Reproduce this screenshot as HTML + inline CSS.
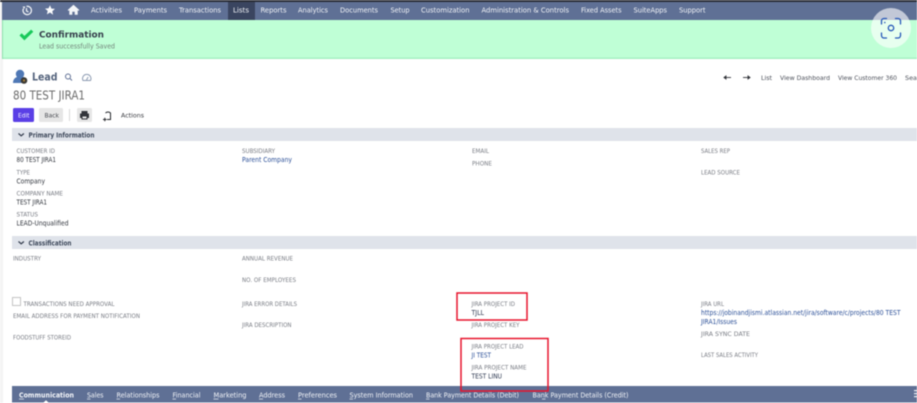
<!DOCTYPE html>
<html lang="en">
<head>
<meta charset="utf-8">
<title>Lead - 80 TEST JIRA1</title>
<style>
html,body{margin:0;padding:0;background:#fff;width:917px;height:403px;overflow:hidden}
svg{display:block;position:absolute;left:0;top:0;filter:blur(.42px)}
text{font-family:"DejaVu Sans","Liberation Sans",sans-serif;font-size:6.6px;white-space:pre}
.n{fill:#f2f4f8;font-size:6.9px}
.l{fill:#7a7d85;font-size:6.4px}
.v{fill:#33373f;font-size:6.6px}
.a{fill:#2c5098;font-size:6.6px}
.h{fill:#3f4a5c;font-size:6.8px;font-weight:bold}
.t{fill:#f2f4f8;font-size:6.8px}
.r{fill:#4e525c;font-size:6.4px}
</style>
</head>
<body>
<svg width="917" height="403" viewBox="0 0 917 403" xmlns="http://www.w3.org/2000/svg">
<rect width="917" height="403" fill="#fff"/>
<rect x="0" y="0" width="3" height="403" fill="#f4f4f4"/>
<rect x="0" y="0" width="917" height="2" fill="#2a2d36"/>
<rect x="2" y="2" width="915" height="18" fill="#5f7095"/>
<rect x="228" y="2" width="27" height="18" fill="#3a4560"/>

<g fill="none" stroke="#f3f5f8" stroke-width="1.2">
<path d="M23.5 8.5 A4.2 4.2 0 1 0 26.5 6.3"/>
<path d="M26.5 8v3l2 1"/>
</g>
<path d="M22.5 6.5l1.8 2.4 1-2.4z" fill="#f3f5f8"/>
<path d="M50 5.3l1.4 3.3 3.6.3-2.7 2.3.8 3.5L50 12.5l-3.1 1.9.8-3.5-2.7-2.3 3.6-.3z" fill="#fbfcfd"/>
<path d="M73.5 4.8l5.8 5.2-.8.9-.8-.7v4.6h-3v-3h-2.4v3h-3V10.200l-.8.7-.8-.9z" fill="#f3f5f8"/>

<text class="n" y="12.500" x="91" textLength="31" lengthAdjust="spacingAndGlyphs">Activities</text>
<text class="n" y="12.500" x="134" textLength="33" lengthAdjust="spacingAndGlyphs">Payments</text>
<text class="n" y="12.500" x="179" textLength="42" lengthAdjust="spacingAndGlyphs">Transactions</text>
<text class="n" y="12.500" x="233" textLength="16" lengthAdjust="spacingAndGlyphs">Lists</text>
<text class="n" y="12.500" x="260.500" textLength="26" lengthAdjust="spacingAndGlyphs">Reports</text>
<text class="n" y="12.500" x="298" textLength="30" lengthAdjust="spacingAndGlyphs">Analytics</text>
<text class="n" y="12.500" x="340" textLength="38" lengthAdjust="spacingAndGlyphs">Documents</text>
<text class="n" y="12.500" x="390.500" textLength="19" lengthAdjust="spacingAndGlyphs">Setup</text>
<text class="n" y="12.500" x="421" textLength="48.500" lengthAdjust="spacingAndGlyphs">Customization</text>
<text class="n" y="12.500" x="481.500" textLength="87.500" lengthAdjust="spacingAndGlyphs">Administration &amp; Controls</text>
<text class="n" y="12.500" x="581" textLength="40.500" lengthAdjust="spacingAndGlyphs">Fixed Assets</text>
<text class="n" y="12.500" x="633.500" textLength="33.500" lengthAdjust="spacingAndGlyphs">SuiteApps</text>
<text class="n" y="12.500" x="679" textLength="26.500" lengthAdjust="spacingAndGlyphs">Support</text>

<rect x="2" y="20" width="915" height="39" fill="#bfffd6"/>
<rect x="2" y="57.500" width="915" height="1.500" fill="#a6f0c2"/>
<rect x="2" y="20" width="1" height="39" fill="#8fe0ad"/>
<path d="M19.500 35.500l2.200-2.300 2.700 2.700 6.700-6.300 2.200 2.200-8.900 8.600z" fill="#18c95a"/>
<text x="39" y="37.300" textLength="65" lengthAdjust="spacingAndGlyphs" style="font-size:8.800px;font-weight:bold;fill:#37404d">Confirmation</text>
<text x="39" y="48.300" textLength="76" lengthAdjust="spacingAndGlyphs" style="font-size:6.600px;fill:#74877c">Lead successfully Saved</text>

<circle cx="891" cy="28" r="20" fill="#fff" fill-opacity=".62"/>
<g fill="none" stroke="#2557b8" stroke-width="1.300" stroke-linecap="round">
<path d="M881.500 24v-3a2.500 2.500 0 0 1 2.500-2.500h2.500"/>
<path d="M895.500 18.500h2.500a2.500 2.500 0 0 1 2.500 2.500v3"/>
<path d="M900.500 33v2.500a2.500 2.500 0 0 1-2.500 2.500h-2.500"/>
<path d="M886.500 38H884a2.500 2.500 0 0 1-2.500-2.500V33"/>
<circle cx="891" cy="28" r="2.700"/>
</g>
<circle cx="884.800" cy="22.500" r=".8" fill="#2557b8"/>

<circle cx="20" cy="74" r="4.200" fill="#4f78b5"/>
<path d="M13 83c0-4.500 3-6.500 7-6.500s6 1.500 6.500 3l-2 3.500z" fill="#4f78b5"/>
<circle cx="24" cy="80.500" r="3.300" fill="#3b3a36"/>
<circle cx="24" cy="80.500" r="1" fill="#b9893c"/>
<text x="32" y="80.700" textLength="25.500" lengthAdjust="spacingAndGlyphs" style="font-size:11px;font-weight:bold;fill:#55647d">Lead</text>
<g fill="none" stroke="#5f7095" stroke-width="1">
<circle cx="68" cy="76.500" r="2.500"/>
<path d="M70 78.500l2 2"/>
<path d="M83 80.500a4.200 4.200 0 1 1 7.500 0z" stroke="#8d9bb2"/>
<path d="M86.500 80l1.600-3" stroke="#8d9bb2"/>
</g>
<text x="13" y="99.500" textLength="72" lengthAdjust="spacingAndGlyphs" style="font-size:12.500px;fill:#6c6c6c">80 TEST JIRA1</text>

<rect x="13" y="108" width="21" height="14" rx="1.500" fill="#5a3fe6"/>
<text x="18" y="117.600" textLength="11.500" lengthAdjust="spacingAndGlyphs" style="font-size:6.400px;fill:#f2f0ff">Edit</text>
<rect x="39" y="108" width="24" height="14" rx="1.500" fill="#e6e6e6"/>
<text x="44.500" y="117.600" textLength="14.500" lengthAdjust="spacingAndGlyphs" style="font-size:6.400px;fill:#494c52">Back</text>
<rect x="69" y="109" width="1" height="12" fill="#d9d9d9"/>
<rect x="77" y="108" width="15" height="14" rx="1.500" fill="#e6e6e6"/>
<path d="M81.500 111h6v2.500h1.500v4.500h-1.500v1.500h-6V118H80v-4.500h1.500z" fill="#33353b"/>
<rect x="82.500" y="116.500" width="4" height="2" fill="#e6e6e6"/>
<g fill="none" stroke="#26282d" stroke-width="1">
<path d="M105.500 113a3.500 3.500 0 0 1 5 0v6.500h-3.500"/>
<path d="M103 119.500h3.500M104.800 117.800v3.500"/>
</g>
<text x="121" y="117.600" textLength="23" lengthAdjust="spacingAndGlyphs" style="font-size:6.400px;fill:#3a3c42">Actions</text>

<g stroke="#33353b" stroke-width=".9" fill="#33353b">
<path d="M724 77.500h7" fill="none"/><path d="M726 76l-2 1.500 2 1.500z"/>
<path d="M743 77.500h7" fill="none"/><path d="M748 76l2 1.500-2 1.500z"/>
</g>
<text class="r" x="761" y="80" textLength="11" lengthAdjust="spacingAndGlyphs">List</text>
<text class="r" x="780" y="80" textLength="50" lengthAdjust="spacingAndGlyphs">View Dashboard</text>
<text class="r" x="838" y="80" textLength="59" lengthAdjust="spacingAndGlyphs">View Customer 360</text>
<text class="r" x="905" y="80" textLength="12" lengthAdjust="spacingAndGlyphs">Sea</text>

<rect x="12" y="128" width="905" height="13" fill="#dfe3ea"/>
<path d="M18.500 133.500l2.700 2.300 2.700-2.300" fill="none" stroke="#333c4d" stroke-width="1.200"/>
<text class="h" x="28.500" y="137.300" textLength="66" lengthAdjust="spacingAndGlyphs">Primary Information</text>
<rect x="12" y="236" width="905" height="13" fill="#dfe3ea"/>
<path d="M18.500 241.500l2.700 2.300 2.700-2.300" fill="none" stroke="#333c4d" stroke-width="1.200"/>
<text class="h" x="28.500" y="245.300" textLength="43" lengthAdjust="spacingAndGlyphs">Classification</text>

<text class="l" x="16.500" y="153" textLength="38.500" lengthAdjust="spacingAndGlyphs">CUSTOMER ID</text>
<text class="v" x="16.500" y="162" textLength="39.500" lengthAdjust="spacingAndGlyphs">80 TEST JIRA1</text>
<text class="l" x="16.500" y="174.300" textLength="13.500" lengthAdjust="spacingAndGlyphs">TYPE</text>
<text class="v" x="16.500" y="183.300" textLength="28.500" lengthAdjust="spacingAndGlyphs">Company</text>
<text class="l" x="16.500" y="195.500" textLength="46.500" lengthAdjust="spacingAndGlyphs">COMPANY NAME</text>
<text class="v" x="16.500" y="204.500" textLength="30.500" lengthAdjust="spacingAndGlyphs">TEST JIRA1</text>
<text class="l" x="16.500" y="216.500" textLength="21.500" lengthAdjust="spacingAndGlyphs">STATUS</text>
<text class="v" x="16.500" y="225.500" textLength="52" lengthAdjust="spacingAndGlyphs">LEAD-Unqualified</text>

<text class="l" x="242" y="153" textLength="33" lengthAdjust="spacingAndGlyphs">SUBSIDIARY</text>
<text class="a" x="242" y="162" textLength="50" lengthAdjust="spacingAndGlyphs">Parent Company</text>
<text class="l" x="472" y="153" textLength="17" lengthAdjust="spacingAndGlyphs">EMAIL</text>
<text class="l" x="472" y="165.300" textLength="20" lengthAdjust="spacingAndGlyphs">PHONE</text>
<text class="l" x="701" y="153" textLength="29" lengthAdjust="spacingAndGlyphs">SALES REP</text>
<text class="l" x="701" y="174.300" textLength="39" lengthAdjust="spacingAndGlyphs">LEAD SOURCE</text>

<text class="l" x="13" y="260.500" textLength="28" lengthAdjust="spacingAndGlyphs">INDUSTRY</text>
<text class="l" x="242" y="260.500" textLength="51" lengthAdjust="spacingAndGlyphs">ANNUAL REVENUE</text>
<text class="l" x="242" y="281.800" textLength="54" lengthAdjust="spacingAndGlyphs">NO. OF EMPLOYEES</text>

<rect x="12.500" y="297.500" width="8" height="8" fill="#fff" stroke="#c4c4c4" stroke-width="1"/>
<text class="l" x="23.500" y="305.800" textLength="91" lengthAdjust="spacingAndGlyphs">TRANSACTIONS NEED APPROVAL</text>
<text class="l" x="13" y="317.800" textLength="127" lengthAdjust="spacingAndGlyphs">EMAIL ADDRESS FOR PAYMENT NOTIFICATION</text>
<text class="l" x="13" y="339.300" textLength="58" lengthAdjust="spacingAndGlyphs">FOODSTUFF STOREID</text>

<text class="l" x="242" y="305.800" textLength="55" lengthAdjust="spacingAndGlyphs">JIRA ERROR DETAILS</text>
<text class="l" x="242" y="327.200" textLength="49.500" lengthAdjust="spacingAndGlyphs">JIRA DESCRIPTION</text>

<text class="l" x="471.500" y="305.800" textLength="43.500" lengthAdjust="spacingAndGlyphs">JIRA PROJECT ID</text>
<text class="v" x="471.500" y="314.800" textLength="12.500" lengthAdjust="spacingAndGlyphs" style="fill:#2f3a52">TJLL</text>
<text class="l" x="471.500" y="327.200" textLength="48" lengthAdjust="spacingAndGlyphs">JIRA PROJECT KEY</text>
<text class="l" x="471.500" y="348.300" textLength="52" lengthAdjust="spacingAndGlyphs">JIRA PROJECT LEAD</text>
<text class="a" x="471.500" y="357.300" textLength="19.500" lengthAdjust="spacingAndGlyphs">JI TEST</text>
<text class="l" x="471.500" y="369.500" textLength="55" lengthAdjust="spacingAndGlyphs">JIRA PROJECT NAME</text>
<text class="v" x="471.500" y="378.500" textLength="30.500" lengthAdjust="spacingAndGlyphs" style="fill:#2f3a52">TEST LINU</text>

<text class="l" x="701" y="305.800" textLength="23" lengthAdjust="spacingAndGlyphs">JIRA URL</text>
<text class="a" x="701" y="314.800" textLength="199.500" lengthAdjust="spacingAndGlyphs">https://jobinandjismi.atlassian.net/jira/software/c/projects/80 TEST</text>
<text class="a" x="701" y="323.800" textLength="36" lengthAdjust="spacingAndGlyphs">JIRA1/Issues</text>
<text class="l" x="701" y="335.800" textLength="49" lengthAdjust="spacingAndGlyphs">JIRA SYNC DATE</text>
<text class="l" x="701" y="356.800" textLength="57" lengthAdjust="spacingAndGlyphs">LAST SALES ACTIVITY</text>

<rect x="12" y="386" width="905" height="16.500" fill="#5f7095"/>
<text x="19" y="397.500" textLength="55" lengthAdjust="spacingAndGlyphs" style="font-size:6.900px;font-weight:bold;fill:#f4f6fa">Communication</text>
<text class="t" x="87" y="397.500" textLength="16.500" lengthAdjust="spacingAndGlyphs">Sales</text>
<text class="t" x="116.500" y="397.500" textLength="43" lengthAdjust="spacingAndGlyphs">Relationships</text>
<text class="t" x="172.500" y="397.500" textLength="28" lengthAdjust="spacingAndGlyphs">Financial</text>
<text class="t" x="213.500" y="397.500" textLength="33" lengthAdjust="spacingAndGlyphs">Marketing</text>
<text class="t" x="259" y="397.500" textLength="26" lengthAdjust="spacingAndGlyphs">Address</text>
<text class="t" x="298" y="397.500" textLength="39" lengthAdjust="spacingAndGlyphs">Preferences</text>
<text class="t" x="349.500" y="397.500" textLength="63.500" lengthAdjust="spacingAndGlyphs">System Information</text>
<text class="t" x="426" y="397.500" textLength="93" lengthAdjust="spacingAndGlyphs">Bank Payment Details (Debit)</text>
<text class="t" x="532.500" y="397.500" textLength="96" lengthAdjust="spacingAndGlyphs">Bank Payment Details (Credit)</text>
<g fill="#eef1f6">
<rect x="19" y="398.700" width="5" height=".7"/>
<rect x="87" y="398.700" width="3.500" height=".7"/>
<rect x="116.500" y="398.700" width="3.500" height=".7"/>
<rect x="172.500" y="398.700" width="3.500" height=".7"/>
<rect x="213.500" y="398.700" width="5" height=".7"/>
<rect x="259" y="398.700" width="4" height=".7"/>
<rect x="298" y="398.700" width="3.500" height=".7"/>
<rect x="349.500" y="398.700" width="3.500" height=".7"/>
<rect x="426" y="398.700" width="3.500" height=".7"/>
<rect x="542" y="398.700" width="3.500" height=".7"/>
<rect x="914" y="390" width="3" height="1.200"/>
<rect x="914" y="393" width="3" height="1.200"/>
<rect x="914" y="396" width="3" height="1.200"/>
</g>
<path d="M43 403l3-2.800 3 2.800z" fill="#fff"/>

<g fill="none" stroke="#e8142d" stroke-width="1.500">
<rect x="457" y="293" width="70" height="27"/>
<rect x="461" y="338.500" width="87" height="52.500"/>
</g>
</svg>
</body>
</html>
